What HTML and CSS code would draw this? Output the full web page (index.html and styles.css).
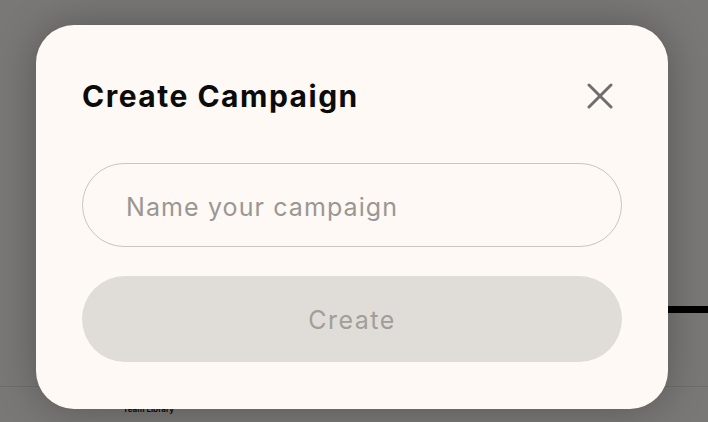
FILE: index.html
```html
<!DOCTYPE html>
<html lang="en">
<head>
<meta charset="utf-8">
<title>Create Campaign</title>
<link rel="stylesheet" href="styles.css">
</head>
<body>
  <div class="app">
    <div class="app-rule"></div>
    <div class="app-footer">
      <span class="app-footer-label">Team Library</span>
    </div>
  </div>

  <div class="overlay">
    <div class="modal" role="dialog" aria-labelledby="modal-title">
      <div class="modal-head">
        <h2 id="modal-title" class="modal-title">Create Campaign</h2>
        <button class="modal-close" aria-label="Close">
          <svg width="26" height="26" viewBox="0 0 26 26" aria-hidden="true">
            <path d="M2 2 L24 24 M24 2 L2 24" stroke="#6f6e6d" stroke-width="3" stroke-linecap="round" fill="none"/>
          </svg>
        </button>
      </div>
      <input class="modal-input" type="text" placeholder="Name your campaign">
      <button class="modal-submit" disabled>Create</button>
    </div>
  </div>
</body>
</html>
```
FILE: styles.css
```css
* { box-sizing: border-box; }

html, body {
  margin: 0;
  height: 100%;
}

body {
  position: relative;
  overflow: hidden;
  background: #fffbf6;
  font-family: "Inter", "Open Sans", sans-serif;
}

/* page underneath the dialog */
.app {
  height: 100%;
  display: flex;
  flex-direction: column;
}

.app-rule {
  margin-top: 306px;
  margin-left: auto;
  width: 60px;
  height: 7px;
  background: #000;
}

.app-footer {
  margin-top: auto;
  height: 36px;
  border-top: 1px solid #e6e2de;
  padding-left: 123px;
  display: flex;
  align-items: flex-end;
}

.app-footer-label {
  font-size: 8px;
  font-weight: 700;
  color: #222;
  padding-bottom: 8px;
}

/* dimmed backdrop */
.overlay {
  position: absolute;
  inset: 0;
  background: rgba(0, 0, 0, 0.52);
  padding: 25px 0 0 36px;
}

.modal {
  width: 632px;
  height: 384px;
  background: #fef9f5;
  border-radius: 38px;
  padding: 46px 46px 0 46px;
  box-shadow: 0 0 40px rgba(0, 0, 0, 0.28);
  display: flex;
  flex-direction: column;
}

.modal-head {
  height: 50px;
  display: flex;
  align-items: center;
  justify-content: space-between;
}

.modal-title {
  margin: 0;
  font-size: 30px;
  font-weight: 700;
  color: #0b0b0b;
  letter-spacing: 1.5px;
}

.modal-close {
  width: 26px;
  height: 26px;
  margin-right: 9px;
  padding: 0;
  border: 0;
  background: none;
  display: flex;
}

.modal-input {
  margin-top: 42px;
  height: 84px;
  border: 1px solid #c9c5c1;
  border-radius: 42px;
  background: transparent;
  padding: 3px 0 0 43px;
  font-family: inherit;
  font-size: 25px;
  letter-spacing: 1.1px;
  color: #333;
  outline: none;
}

.modal-input::placeholder {
  color: #9a9793;
}

.modal-submit {
  margin-top: 29px;
  height: 86px;
  border: 0;
  border-radius: 43px;
  background: #e0ddd8;
  padding-top: 2px;
  font-family: inherit;
  font-size: 25px;
  letter-spacing: 1.5px;
  color: #a19e9a;
}
```
